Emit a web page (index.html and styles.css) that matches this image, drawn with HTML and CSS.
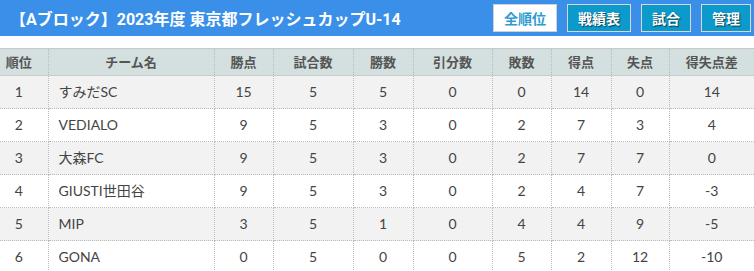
FILE: index.html
```html
<!DOCTYPE html>
<html lang="ja">
<head>
<meta charset="utf-8">
<link rel="stylesheet" href="styles.css">
</head>
<body>
<header class="bar">
  <h1 class="title">【Aブロック】2023年度 東京都フレッシュカップU-14</h1>
  <nav class="nav">
    <a class="btn btn-active">全順位</a>
    <a class="btn">戦績表</a>
    <a class="btn">試合</a>
    <a class="btn">管理</a>
  </nav>
</header>
<table class="standings">
  <colgroup>
    <col class="c-rank"><col class="c-team"><col class="c-pts"><col class="c-gp"><col class="c-w"><col class="c-d"><col class="c-l"><col class="c-gf"><col class="c-ga"><col class="c-gd">
  </colgroup>
  <thead>
    <tr><th class="rank">順位</th><th>チーム名</th><th>勝点</th><th>試合数</th><th>勝数</th><th>引分数</th><th>敗数</th><th>得点</th><th>失点</th><th class="gd">得失点差</th></tr>
  </thead>
  <tbody>
    <tr><td class="rank">1</td><td class="team">すみだSC</td><td>15</td><td>5</td><td>5</td><td>0</td><td>0</td><td>14</td><td>0</td><td class="gd">14</td></tr>
    <tr><td class="rank">2</td><td class="team">VEDIALO</td><td>9</td><td>5</td><td>3</td><td>0</td><td>2</td><td>7</td><td>3</td><td class="gd">4</td></tr>
    <tr><td class="rank">3</td><td class="team">大森FC</td><td>9</td><td>5</td><td>3</td><td>0</td><td>2</td><td>7</td><td>7</td><td class="gd">0</td></tr>
    <tr><td class="rank">4</td><td class="team">GIUSTI世田谷</td><td>9</td><td>5</td><td>3</td><td>0</td><td>2</td><td>4</td><td>7</td><td class="gd">-3</td></tr>
    <tr><td class="rank">5</td><td class="team">MIP</td><td>3</td><td>5</td><td>1</td><td>0</td><td>4</td><td>4</td><td>9</td><td class="gd">-5</td></tr>
    <tr><td class="rank">6</td><td class="team">GONA</td><td>0</td><td>5</td><td>0</td><td>0</td><td>5</td><td>2</td><td>12</td><td class="gd">-10</td></tr>
  </tbody>
</table>
</body>
</html>
```

FILE: styles.css
```css
html, body {
  margin: 0;
  padding: 0;
  background: #fff;
}
body {
  font-family: Lato, "Noto Sans CJK JP", sans-serif;
  color: #444;
}
.bar {
  height: 36px;
  background: #3a90e9;
  display: flex;
  align-items: center;
  justify-content: space-between;
  padding: 0 3px 0 10px;
}
.title {
  margin: 0;
  font-family: Roboto, "Noto Sans CJK JP", sans-serif;
  font-size: 16px;
  font-weight: bold;
  color: #fff;
}
.nav {
  display: flex;
  gap: 10px;
}
.btn {
  display: flex;
  align-items: center;
  justify-content: center;
  height: 26px;
  padding: 0 10px;
  border: 1px solid #d8d8d8;
  background: #0b9acb;
  color: #fff;
  font-family: "Noto Sans CJK JP", sans-serif;
  font-size: 14px;
  font-weight: bold;
  line-height: 1;
  text-shadow: 1px 1px 1px rgba(0, 0, 0, 0.6);
}
.btn-active {
  background: #fff;
  color: #2f9ad0;
  text-shadow: none;
  border-color: #d0d0d0;
}
.standings {
  margin-top: 12px;
  width: 754px;
  border-collapse: collapse;
  table-layout: fixed;
  font-size: 14px;
}
.c-rank { width: 48px; }
.c-team { width: 166px; }
.c-pts { width: 59px; }
.c-gp { width: 80px; }
.c-w { width: 60px; }
.c-d { width: 79px; }
.c-l { width: 59px; }
.c-gf { width: 60px; }
.c-ga { width: 58px; }
.c-gd { width: 85px; }
.standings th {
  height: 26px;
  padding: 0;
  line-height: 16px;
  background: #d4dfdf;
  color: #555;
  font-family: "Noto Sans CJK JP", sans-serif;
  font-weight: bold;
  font-size: 13px;
  text-align: center;
  white-space: nowrap;
  border-top: 1px solid #c8c8c8;
  border-bottom: 1px solid #c8cfcf;
  border-left: 1px dotted #bbb;
  border-right: 1px dotted #bbb;
}
.standings td {
  height: 32px;
  padding: 0;
  line-height: 16px;
  text-align: center;
  white-space: nowrap;
  border: 1px dotted #bbb;
  border-top: none;
}
.standings tr > :first-child { border-left: none; }
.standings tr > :last-child { border-right: none; }
.standings tbody tr:nth-child(odd) { background: #f2f2f2; }
.standings tbody tr:nth-child(even) { background: #fff; }
.standings .rank {
  padding: 0 14px 0 4px;
}
.standings td.team {
  text-align: left;
  padding-left: 10px;
}
```
